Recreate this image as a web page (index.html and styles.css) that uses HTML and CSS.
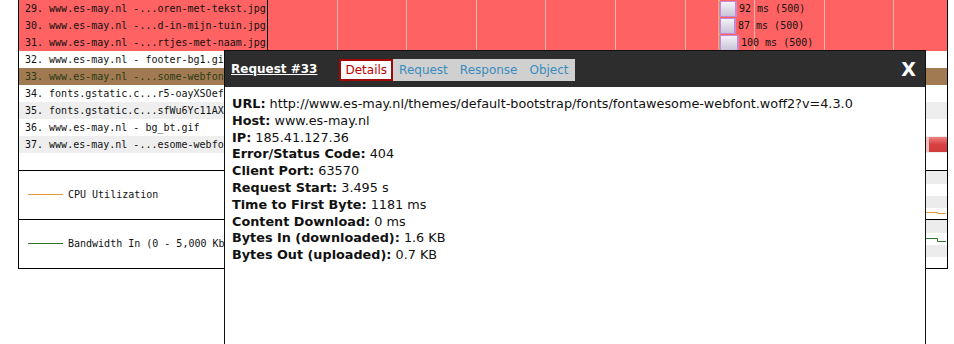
FILE: index.html
```html
<!DOCTYPE html>
<html>
<head>
<meta charset="utf-8">
<link rel="stylesheet" href="styles.css">
</head>
<body>
<div class="wf">
  <div class="row err">
    <div class="lbl">29. www.es-may.nl -...oren-met-tekst.jpg</div>
    <div class="chart"><div class="bar" style="margin-left:451px;width:18px"><i></i></div><span class="btxt">92 ms (500)</span></div>
  </div>
  <div class="row err">
    <div class="lbl">30. www.es-may.nl -...d-in-mijn-tuin.jpg</div>
    <div class="chart"><div class="bar" style="margin-left:451px;width:17px"><i></i></div><span class="btxt">87 ms (500)</span></div>
  </div>
  <div class="row err">
    <div class="lbl">31. www.es-may.nl -...rtjes-met-naam.jpg</div>
    <div class="chart"><div class="bar" style="margin-left:451px;width:20px"><i></i></div><span class="btxt">100 ms (500)</span></div>
  </div>
  <div class="row">
    <div class="lbl">32. www.es-may.nl - footer-bg1.gif</div>
    <div class="chart"></div>
  </div>
  <div class="row warn">
    <div class="lbl">33. www.es-may.nl -...some-webfont.woff2</div>
    <div class="chart"></div>
  </div>
  <div class="row">
    <div class="lbl">34. fonts.gstatic.c...r5-oayXSOefg.woff2</div>
    <div class="chart"></div>
  </div>
  <div class="row alt">
    <div class="lbl">35. fonts.gstatic.c...sfWu6Yc11AXg.woff2</div>
    <div class="chart"></div>
  </div>
  <div class="row">
    <div class="lbl">36. www.es-may.nl - bg_bt.gif</div>
    <div class="chart"></div>
  </div>
  <div class="row alt">
    <div class="lbl">37. www.es-may.nl -...esome-webfont.woff</div>
    <div class="chart"><div class="rbar" style="margin-left:656px;width:30px"></div></div>
  </div>
  <div class="gap"></div>
  <div class="sect">
    <div class="lbl"><span class="key cpu"></span><span class="ktxt">CPU Utilization</span></div>
    <div class="chart stripes">
      <svg class="graph" width="678" height="48" viewBox="0 0 678 48"><polyline points="0,41.5 670,41.5 670,42.5 678,42.5" fill="none" stroke="#e8963c" stroke-width="1"/></svg>
    </div>
  </div>
  <div class="sect">
    <div class="lbl"><span class="key bw"></span><span class="ktxt">Bandwidth In (0 - 5,000 Kbps)</span></div>
    <div class="chart stripes">
      <svg class="graph" width="678" height="48" viewBox="0 0 678 48"><polyline points="0,18.5 669.5,18.5 669.5,21.5 678,21.5" fill="none" stroke="#2a7a2a" stroke-width="1"/></svg>
    </div>
  </div>
</div>

<div class="dialog">
  <div class="dhead">
    <span class="dtitle">Request #33</span>
    <div class="tabs">
      <span class="tab active">Details</span>
      <span class="tab">Request</span>
      <span class="tab">Response</span>
      <span class="tab">Object</span>
    </div>
    <span class="close">X</span>
  </div>
  <div class="dbody">
    <div><b>URL:</b> http://www.es-may.nl/themes/default-bootstrap/fonts/fontawesome-webfont.woff2?v=4.3.0</div>
    <div><b>Host:</b> www.es-may.nl</div>
    <div><b>IP:</b> 185.41.127.36</div>
    <div><b>Error/Status Code:</b> 404</div>
    <div><b>Client Port:</b> 63570</div>
    <div><b>Request Start:</b> 3.495 s</div>
    <div><b>Time to First Byte:</b> 1181 ms</div>
    <div><b>Content Download:</b> 0 ms</div>
    <div><b>Bytes In (downloaded):</b> 1.6 KB</div>
    <div><b>Bytes Out (uploaded):</b> 0.7 KB</div>
  </div>
</div>
</body>
</html>
```
FILE: styles.css
```css
html, body {
  margin: 0;
  padding: 0;
  background: #fff;
  overflow: hidden;
}
body {
  position: relative;
  height: 344px;
  font-family: "DejaVu Sans", Verdana, sans-serif;
}
.wf {
  margin-left: 18px;
  width: 930px;
  box-sizing: border-box;
  border-left: 1px solid #000;
  border-right: 1px solid #000;
  font-family: "DejaVu Sans Mono", "Liberation Mono", monospace;
  font-size: 10px;
  color: #111;
}
.row {
  display: flex;
  height: 17px;
  line-height: 17px;
}
.lbl {
  width: 249px;
  flex: none;
  box-sizing: border-box;
  border-right: 1px solid #000;
  padding-left: 6px;
  white-space: nowrap;
  overflow: hidden;
}
.chart {
  flex: 1;
  display: flex;
  align-items: center;
  overflow: hidden;
  position: relative;
  background-image:
    linear-gradient(to right, transparent 450px, #f4a04a 450px, #f8b870 452px, transparent 452px);
}
.row.alt { background: #eeeeee; }
.row.err { background: #fe6262; }
.row.err .chart {
  background-image:
    linear-gradient(to right, transparent 450px, #f4a04a 450px, #f8b870 452px, transparent 452px),
    repeating-linear-gradient(to right, transparent 0, transparent 68.6px, #f2b4b4 68.6px, #f2b4b4 69.6px);
}
.row.warn { background: #a27a52; color: #2a3a12; }
.bar {
  height: 16px;
  background: #c58ad6;
  box-sizing: border-box;
  padding: 1px 2px 1px 2px;
  flex: none;
}
.bar i {
  display: block;
  height: 100%;
  background: linear-gradient(to bottom, #f4f2f8, #c8c4d6);
}
.btxt {
  margin-left: 2px;
  white-space: nowrap;
}
.rbar {
  height: 15px;
  flex: none;
  background:
    linear-gradient(to right, #f2c2c2 0, #f2c2c2 5px, transparent 5px),
    linear-gradient(to bottom, #f08080, #d84040 50%, #d03c3c);
}
.gap { height: 17px; }
.sect {
  display: flex;
  height: 48px;
  border-top: 1px solid #000;
}
.sect:last-child { border-bottom: 1px solid #000; }
.sect .lbl {
  display: flex;
  align-items: flex-start;
  padding-left: 9px;
}
.key {
  display: block;
  flex: none;
  width: 35px;
  height: 1px;
  margin-top: 23px;
  margin-right: 5px;
}
.ktxt {
  display: block;
  line-height: 14px;
  margin-top: 17px;
}
.key.cpu { background: #e8963c; }
.key.bw { background: #2a7a2a; }
.stripes {
  background-image: repeating-linear-gradient(to bottom, #ececec 0, #ececec 12px, #fff 12px, #fff 23.5px);
  background-position: 0 1px;
}
.graph {
  position: absolute;
  left: 0;
  top: 0;
}

.dialog {
  position: absolute;
  left: 224px;
  top: 50px;
  width: 702px;
  height: 320px;
  box-sizing: border-box;
  border: 1px solid #111;
  background: #fff;
  font-size: 12.8px;
}
.dhead {
  height: 36px;
  background: #2d2d2d;
  display: flex;
  align-items: center;
  padding: 0 9px 0 6px;
}
.dtitle {
  color: #fff;
  font-weight: bold;
  font-size: 12px;
  text-decoration: underline;
  margin-right: 22px;
}
.tabs {
  display: flex;
  align-items: stretch;
  height: 22px;
  background: #d0d0d0;
  margin-top: 1px;
  font-size: 12px;
}
.tab {
  display: flex;
  align-items: center;
  padding: 0 6px;
  color: #3a8cc0;
}
.tab.active {
  background: #fff;
  color: #c00000;
  border: 2px solid #a00808;
  padding: 0 4px;
}
.close {
  margin-left: auto;
  color: #fff;
  font-weight: bold;
  font-size: 19px;
  line-height: 1;
}
.dbody {
  padding: 9px 7px;
  color: #111;
  line-height: 16.8px;
  white-space: nowrap;
}
```
